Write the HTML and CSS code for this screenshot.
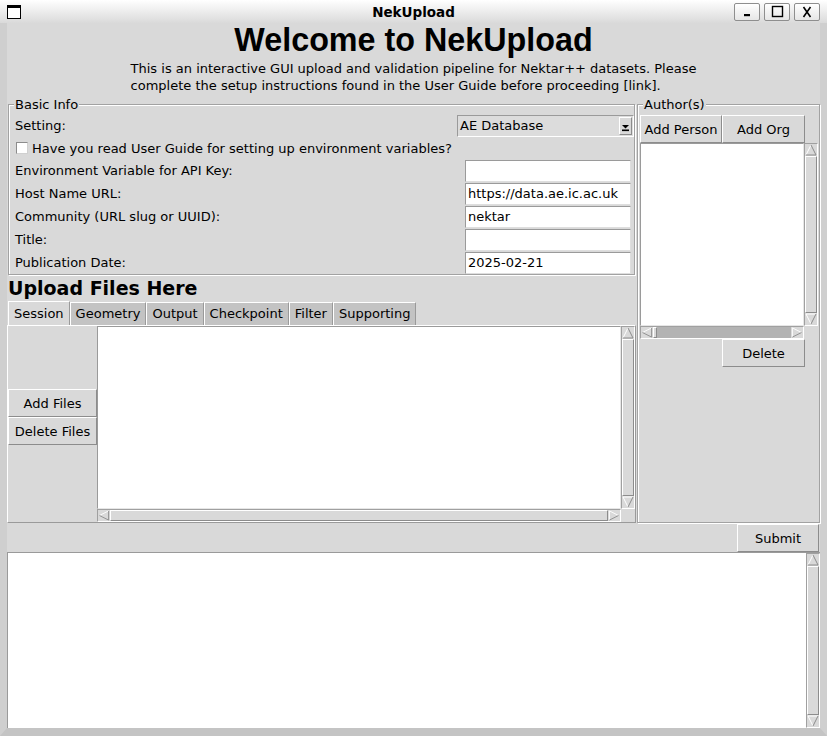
FILE: index.html
```html
<!DOCTYPE html>
<html lang="en">
<head>
<meta charset="utf-8">
<title>NekUpload</title>
<link rel="stylesheet" href="styles.css">
</head>
<body>
<div class="window">
  <div class="titlebar">
    <div class="tb-icon"></div>
    <div class="tb-title">NekUpload</div>
    <div class="tb-controls">
      <span class="tb-btn"><svg viewBox="0 0 24 16" width="24" height="16"><rect x="9" y="10" width="6" height="2.2" fill="#000"/></svg></span>
      <span class="tb-btn"><svg viewBox="0 0 24 16" width="24" height="16"><rect x="7.5" y="2.5" width="10" height="10" fill="none" stroke="#000" stroke-width="1.4"/></svg></span>
      <span class="tb-btn"><svg viewBox="0 0 24 16" width="24" height="16"><path d="M8.5 3 L15.5 13 M15.5 3 L8.5 13" stroke="#000" stroke-width="1.6" fill="none"/></svg></span>
    </div>
  </div>

  <div class="client">
    <h1 class="heading">Welcome to NekUpload</h1>
    <p class="intro">This is an interactive GUI upload and validation pipeline for Nektar++ datasets. Please<br>complete the setup instructions found in the User Guide before proceeding [link].</p>

    <div class="main">
      <div class="left">
        <section class="lframe basic">
          <div class="lf-title">Basic Info</div>
          <div class="rows">
            <div class="row">
              <span>Setting:</span>
              <div class="combo">
                <span class="combo-text">AE Database</span>
                <span class="combo-btn"><svg viewBox="0 0 9 7" width="9" height="7"><polygon points="1,0 8,0 4.5,3.5" fill="#000"/><rect x="1" y="4.5" width="7" height="1.6" fill="#000"/></svg></span>
              </div>
            </div>
            <div class="row row-check">
              <span class="cb"></span>
              <span>Have you read User Guide for setting up environment variables?</span>
            </div>
            <div class="row"><span>Environment Variable for API Key:</span><div class="entry"></div></div>
            <div class="row"><span>Host Name URL:</span><div class="entry">https://data.ae.ic.ac.uk</div></div>
            <div class="row"><span>Community (URL slug or UUID):</span><div class="entry">nektar</div></div>
            <div class="row"><span>Title:</span><div class="entry"></div></div>
            <div class="row"><span>Publication Date:</span><div class="entry">2025-02-21</div></div>
          </div>
        </section>

        <h2 class="upload-title">Upload Files Here</h2>
        <div class="tabs">
          <span class="tab active">Session</span>
          <span class="tab">Geometry</span>
          <span class="tab">Output</span>
          <span class="tab">Checkpoint</span>
          <span class="tab">Filter</span>
          <span class="tab">Supporting</span>
        </div>
        <div class="pane">
          <div class="file-btns">
            <button class="btn">Add Files</button>
            <button class="btn">Delete Files</button>
          </div>
          <div class="listbox"></div>
          <div class="scroll vscroll">
            <span class="arr"><svg viewBox="0 0 12 12"><polygon points="1,11 6,1 11,11" fill="#d9d9d9"/><polyline points="1,11 6,1" stroke="#fff" fill="none"/><polyline points="6,1 11,11 1,11" stroke="#8c8c8c" fill="none"/></svg></span>
            <span class="thumb"></span>
            <span class="arr"><svg viewBox="0 0 12 12"><polygon points="1,1 11,1 6,11" fill="#d9d9d9"/><polyline points="6,11 1,1 11,1" stroke="#fff" fill="none"/><polyline points="11,1 6,11" stroke="#8c8c8c" fill="none"/></svg></span>
          </div>
          <div class="scroll hscroll">
            <span class="arr"><svg viewBox="0 0 12 12"><polygon points="11,1 1,6 11,11" fill="#d9d9d9"/><polyline points="11,1 1,6" stroke="#fff" fill="none"/><polyline points="1,6 11,11 11,1" stroke="#8c8c8c" fill="none"/></svg></span>
            <span class="thumb"></span>
            <span class="arr"><svg viewBox="0 0 12 12"><polygon points="1,1 11,6 1,11" fill="#d9d9d9"/><polyline points="1,11 1,1 11,6" stroke="#fff" fill="none"/><polyline points="11,6 1,11" stroke="#8c8c8c" fill="none"/></svg></span>
          </div>
          <div class="corner"></div>
        </div>
      </div>

      <section class="lframe authors">
        <div class="lf-title">Author(s)</div>
        <div class="author-btns">
          <button class="btn w82">Add Person</button>
          <button class="btn w83">Add Org</button>
        </div>
        <div class="author-list">
          <div class="listbox"></div>
          <div class="scroll vscroll">
            <span class="arr"><svg viewBox="0 0 12 12"><polygon points="1,11 6,1 11,11" fill="#d9d9d9"/><polyline points="1,11 6,1" stroke="#fff" fill="none"/><polyline points="6,1 11,11 1,11" stroke="#8c8c8c" fill="none"/></svg></span>
            <span class="thumb"></span>
            <span class="arr"><svg viewBox="0 0 12 12"><polygon points="1,1 11,1 6,11" fill="#d9d9d9"/><polyline points="6,11 1,1 11,1" stroke="#fff" fill="none"/><polyline points="11,1 6,11" stroke="#8c8c8c" fill="none"/></svg></span>
          </div>
          <div class="scroll hscroll trough">
            <span class="arr"><svg viewBox="0 0 12 12"><polygon points="11,1 1,6 11,11" fill="#d9d9d9"/><polyline points="11,1 1,6" stroke="#fff" fill="none"/><polyline points="1,6 11,11 11,1" stroke="#8c8c8c" fill="none"/></svg></span>
            <span class="thumb tiny"></span>
            <span class="gap"></span>
            <span class="arr"><svg viewBox="0 0 12 12"><polygon points="1,1 11,6 1,11" fill="#d9d9d9"/><polyline points="1,11 1,1 11,6" stroke="#fff" fill="none"/><polyline points="11,6 1,11" stroke="#8c8c8c" fill="none"/></svg></span>
          </div>
          <div class="corner"></div>
        </div>
        <button class="btn w83 delete">Delete</button>
      </section>
    </div>

    <div class="submit-row">
      <button class="btn w82">Submit</button>
    </div>

    <div class="log">
      <div class="log-text"></div>
      <div class="scroll vscroll">
        <span class="arr"><svg viewBox="0 0 12 12"><polygon points="1,11 6,1 11,11" fill="#d9d9d9"/><polyline points="1,11 6,1" stroke="#fff" fill="none"/><polyline points="6,1 11,11 1,11" stroke="#8c8c8c" fill="none"/></svg></span>
        <span class="thumb"></span>
        <span class="arr"><svg viewBox="0 0 12 12"><polygon points="1,1 11,1 6,11" fill="#d9d9d9"/><polyline points="6,11 1,1 11,1" stroke="#fff" fill="none"/><polyline points="11,1 6,11" stroke="#8c8c8c" fill="none"/></svg></span>
      </div>
    </div>
  </div>
</div>
</body>
</html>
```

FILE: styles.css
```css
html, body {
  margin: 0;
  padding: 0;
}
body {
  width: 827px;
  height: 736px;
  overflow: hidden;
  background: #d9d9d9;
  font-family: "DejaVu Sans", "Noto Sans", sans-serif;
  font-size: 13px;
  color: #000;
}
.window {
  width: 827px;
  height: 736px;
  display: flex;
  flex-direction: column;
}

/* title bar */
.titlebar {
  height: 23px;
  flex: none;
  display: grid;
  grid-template-columns: 1fr auto 1fr;
  align-items: center;
  background: linear-gradient(#ffffff, #dadada);
}
.tb-icon {
  justify-self: start;
  margin-left: 7px;
  width: 12px;
  height: 10px;
  border: 1px solid #000;
  border-top-width: 3px;
  background: #fff;
}
.tb-title {
  font-weight: bold;
  font-size: 13.5px;
}
.tb-controls {
  justify-self: end;
  display: flex;
  gap: 4px;
  margin-right: 7px;
}
.tb-btn {
  width: 24px;
  height: 16px;
  border: 1px solid #8e8e8e;
  border-radius: 2px;
  background: linear-gradient(#ffffff, #e6e6e6);
  display: flex;
}

/* client */
.client {
  flex: 1;
  min-height: 0;
  display: flex;
  flex-direction: column;
  border-left: 7px solid #cfcfcf;
  border-right: 7px solid #cfcfcf;
  border-bottom: 8px solid #c4c4c4;
}
.heading {
  margin: 0;
  font: bold 32.3px/34px "Liberation Sans", Arial, sans-serif;
  text-align: center;
}
.intro {
  margin: 3px auto 0;
  width: max-content;
  line-height: 17px;
}
.main {
  margin-top: 10px;
  height: 419px;
  display: flex;
}
.left {
  width: 629px;
  flex: none;
  display: flex;
  flex-direction: column;
}

/* label frames */
.lframe {
  box-sizing: border-box;
  border: 1px solid #a2a2a2;
  box-shadow: inset 1px 1px 0 #fff, 1px 1px 0 #fff;
}
.lf-title {
  width: max-content;
  margin: -8px 0 0 5px;
  padding: 0 1px;
  background: #d9d9d9;
  line-height: 15px;
}
.basic {
  margin-left: 1px;
  width: 627px;
  height: 171px;
  flex: none;
}
.rows {
  margin-top: 2px;
  padding-left: 6px;
}
.row {
  height: 23px;
  display: flex;
  align-items: center;
  justify-content: space-between;
}
.row-check {
  height: 22px;
  justify-content: flex-start;
  gap: 4px;
}
.cb {
  margin-left: 1px;
  width: 12px;
  height: 12px;
  box-sizing: border-box;
  background: #fff;
  border: 1px solid;
  border-color: #8c8c8c #d0d0d0 #d0d0d0 #8c8c8c;
}
.combo {
  align-self: flex-start;
  margin-top: 1px;
  width: 177px;
  height: 22px;
  box-sizing: border-box;
  border: 1px solid;
  border-color: #9a9a9a #fff #fff #9a9a9a;
  background: #dcdcdc;
  display: flex;
  align-items: stretch;
}
.combo-text {
  flex: 1;
  padding-left: 2px;
  line-height: 19px;
}
.combo-btn {
  width: 13px;
  margin: 1px 1px 1px 0;
  border: 1px solid;
  border-color: #fff #8c8c8c #8c8c8c #fff;
  background: #d9d9d9;
  display: flex;
  align-items: flex-end;
  justify-content: center;
  padding-bottom: 2px;
  box-sizing: border-box;
}
.combo-btn svg {
  display: block;
}
.entry {
  align-self: flex-start;
  margin: 1px 3px 0 0;
  width: 166px;
  height: 22px;
  box-sizing: border-box;
  border: 1px solid;
  border-color: #9a9a9a #dedede #dedede #9a9a9a;
  background: #fff;
  padding-left: 2px;
  line-height: 20px;
  white-space: nowrap;
  overflow: hidden;
}

/* upload section */
.upload-title {
  margin: 1px 0 0 1px;
  font: bold 19px/24px "DejaVu Sans", sans-serif;
}
.tabs {
  margin: 1px 0 0 1px;
  height: 24px;
  display: flex;
  align-items: flex-end;
}
.tab {
  box-sizing: border-box;
  height: 23px;
  padding: 0 5px;
  background: #c3c3c3;
  border: 1px solid;
  border-color: #fff #9a9a9a transparent #fff;
  border-bottom: none;
  line-height: 22px;
}
.tab.active {
  height: 24px;
  background: #d9d9d9;
  line-height: 23px;
}
.pane {
  height: 198px;
  box-sizing: border-box;
  border: 1px solid;
  border-color: #fff #9a9a9a #9a9a9a #fff;
  display: grid;
  grid-template-columns: 89px 1fr 14px;
  grid-template-rows: 1fr 13px;
}
.file-btns {
  grid-row: 1 / 3;
  display: flex;
  flex-direction: column;
  justify-content: center;
  padding-bottom: 14px;
}
.btn {
  box-sizing: border-box;
  height: 28px;
  margin: 0;
  padding: 0;
  border: 1px solid;
  border-color: #fff #8c8c8c #8c8c8c #fff;
  background: #d9d9d9;
  font: 13px "DejaVu Sans", sans-serif;
  color: #000;
}
.w82 { width: 82px; }
.w83 { width: 83px; }
.listbox {
  box-sizing: border-box;
  background: #fff;
  border: 1px solid;
  border-color: #9a9a9a #e6e6e6 #e6e6e6 #9a9a9a;
}
.corner {
  background: #d9d9d9;
}

/* scrollbars */
.scroll {
  box-sizing: border-box;
  display: flex;
  background: #c3c3c3;
  border: 1px solid;
  border-color: #a0a0a0 #fff #fff #a0a0a0;
}
.vscroll {
  flex-direction: column;
}
.hscroll {
  flex-direction: row;
}
.arr {
  flex: none;
  width: 12px;
  height: 12px;
  background: #d9d9d9;
}
.hscroll .arr {
  height: 11px;
}
.arr svg {
  display: block;
  width: 12px;
  height: 12px;
}
.hscroll .arr svg {
  height: 11px;
}
.thumb {
  flex: 1;
  box-sizing: border-box;
  background: #d9d9d9;
  border: 1px solid;
  border-color: #fff #8c8c8c #8c8c8c #fff;
}
.trough {
  background: #b3b3b3;
}
.thumb.tiny {
  flex: none;
  width: 4px;
}
.gap {
  flex: 1;
}

/* authors */
.authors {
  margin-left: 1px;
  width: 183px;
  height: 419px;
  flex: none;
  padding-left: 2px;
}
.authors .lf-title {
  margin-left: 3px;
}
.author-btns {
  margin-top: 3px;
  display: flex;
}
.author-list {
  display: grid;
  grid-template-columns: 164px 14px;
  grid-template-rows: 183px 13px;
}
.delete {
  display: block;
  margin: 0 0 0 82px;
}

/* submit + log */
.submit-row {
  height: 29px;
  flex: none;
  display: flex;
  justify-content: flex-end;
  align-items: flex-start;
}
.submit-row .btn {
  margin: 1px 1px 0 0;
}
.log {
  flex: 1;
  min-height: 0;
  display: flex;
  border-top: 1px solid #9a9a9a;
  border-left: 1px solid #9a9a9a;
}
.log-text {
  flex: 1;
  background: #fff;
}
.log .vscroll {
  width: 14px;
  flex: none;
}
```
